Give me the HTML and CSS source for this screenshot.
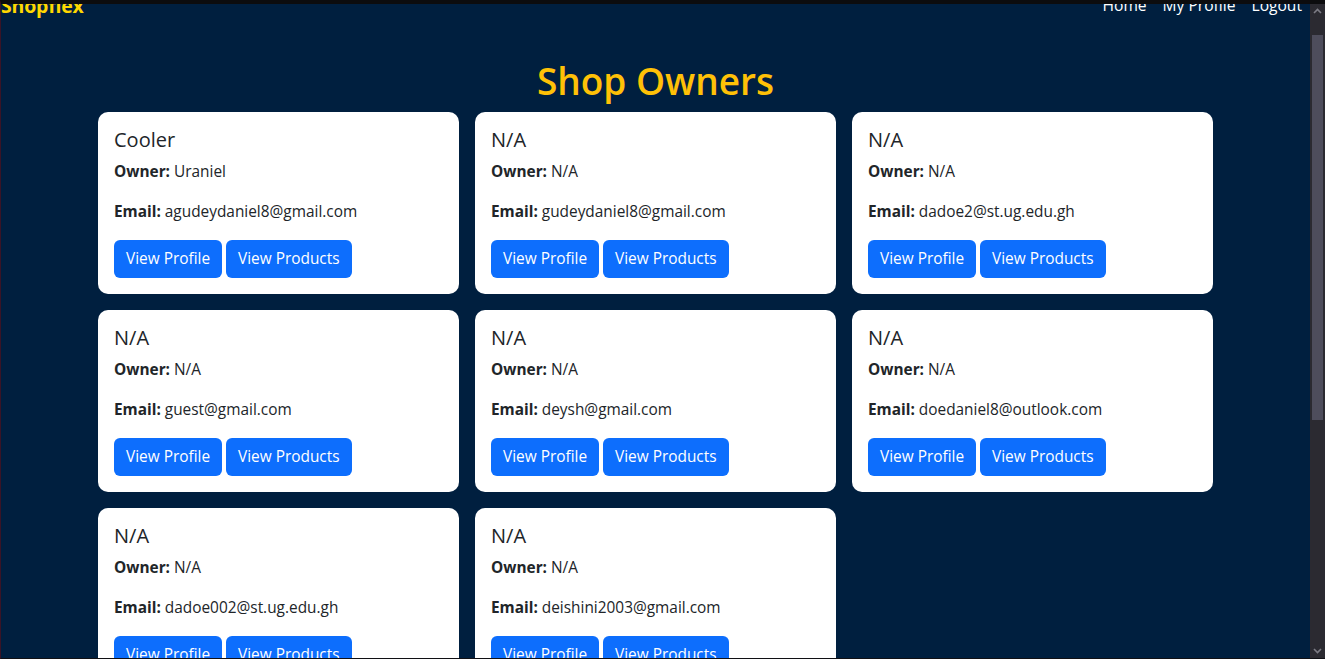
FILE: index.html
```html
<!DOCTYPE html>
<html lang="en">
<head>
<meta charset="utf-8">
<title>Shopflex - Shop Owners</title>
<link rel="stylesheet" href="styles.css">
</head>
<body>
<div class="window">
  <div class="page">
    <header class="navbar">
      <span class="brand">Shopflex</span>
      <nav class="links">
        <a href="#">Home</a>
        <a href="#">My Profile</a>
        <a href="#">Logout</a>
      </nav>
    </header>
    <h1 class="title">Shop Owners</h1>
    <main class="grid">
      <div class="card">
        <h5>Cooler</h5>
        <p><b>Owner:</b> Uraniel</p>
        <p><b>Email:</b> agudeydaniel8@gmail.com</p>
        <div class="btns"><a class="btn" href="#">View Profile</a><a class="btn" href="#">View Products</a></div>
      </div>
      <div class="card">
        <h5>N/A</h5>
        <p><b>Owner:</b> N/A</p>
        <p><b>Email:</b> gudeydaniel8@gmail.com</p>
        <div class="btns"><a class="btn" href="#">View Profile</a><a class="btn" href="#">View Products</a></div>
      </div>
      <div class="card">
        <h5>N/A</h5>
        <p><b>Owner:</b> N/A</p>
        <p><b>Email:</b> dadoe2@st.ug.edu.gh</p>
        <div class="btns"><a class="btn" href="#">View Profile</a><a class="btn" href="#">View Products</a></div>
      </div>
      <div class="card">
        <h5>N/A</h5>
        <p><b>Owner:</b> N/A</p>
        <p><b>Email:</b> guest@gmail.com</p>
        <div class="btns"><a class="btn" href="#">View Profile</a><a class="btn" href="#">View Products</a></div>
      </div>
      <div class="card">
        <h5>N/A</h5>
        <p><b>Owner:</b> N/A</p>
        <p><b>Email:</b> deysh@gmail.com</p>
        <div class="btns"><a class="btn" href="#">View Profile</a><a class="btn" href="#">View Products</a></div>
      </div>
      <div class="card">
        <h5>N/A</h5>
        <p><b>Owner:</b> N/A</p>
        <p><b>Email:</b> doedaniel8@outlook.com</p>
        <div class="btns"><a class="btn" href="#">View Profile</a><a class="btn" href="#">View Products</a></div>
      </div>
      <div class="card">
        <h5>N/A</h5>
        <p><b>Owner:</b> N/A</p>
        <p><b>Email:</b> dadoe002@st.ug.edu.gh</p>
        <div class="btns"><a class="btn" href="#">View Profile</a><a class="btn" href="#">View Products</a></div>
      </div>
      <div class="card">
        <h5>N/A</h5>
        <p><b>Owner:</b> N/A</p>
        <p><b>Email:</b> deishini2003@gmail.com</p>
        <div class="btns"><a class="btn" href="#">View Profile</a><a class="btn" href="#">View Products</a></div>
      </div>
    </main>
  </div>
  <div class="scrollbar">
    <svg class="arrow" width="15" height="15" viewBox="0 0 15 15"><path d="M4 9 L7.5 5.5 L11 9" fill="none" stroke="#7d7c85" stroke-width="1.6"/></svg>
    <div class="track"><div class="thumb"></div></div>
    <svg class="arrow" width="15" height="15" viewBox="0 0 15 15"><path d="M4 6 L7.5 9.5 L11 6" fill="none" stroke="#7d7c85" stroke-width="1.6"/></svg>
  </div>
</div>
</body>
</html>
```
FILE: styles.css
```css
* { box-sizing: border-box; }
html, body { margin: 0; padding: 0; }
body {
  width: 1325px;
  height: 659px;
  overflow: hidden;
  background: #0c0c0e;
  font-family: "Open Sans", "Noto Sans", sans-serif;
}
.window {
  height: 659px;
  display: flex;
  border-top: 4px solid #0c0c0e;
  border-left: 1px solid #3a1426;
  border-bottom: 1px solid #101014;
}
.page {
  flex: 1;
  background: #001f3f;
  overflow: hidden;
}
.navbar {
  display: flex;
  justify-content: space-between;
  align-items: center;
  margin-top: -12px;
  height: 26px;
  padding-right: 8px;
}
.brand {
  color: #ffd700;
  font-weight: 700;
  font-size: 19.5px;
  letter-spacing: -0.2px;
}
.links { display: flex; gap: 16px; }
.links a {
  color: #ffffff;
  text-decoration: none;
  font-size: 15.6px;
}
.title {
  margin: 36px 0 0;
  height: 54px;
  line-height: 54px;
  text-align: center;
  color: #ffc107;
  font-size: 37px;
  font-weight: 600;
}
.grid {
  display: grid;
  grid-template-columns: repeat(3, 361px);
  gap: 16px;
  justify-content: center;
  margin-top: 4px;
}
.card {
  background: #ffffff;
  border-radius: 10px;
  padding: 16px;
  color: #212529;
}
.card h5 {
  margin: 0 0 8px;
  font-size: 20px;
  font-weight: 500;
  line-height: 24px;
}
.card p {
  margin: 0 0 16px;
  font-size: 15.4px;
  line-height: 24px;
}
.card b { font-weight: 700; }
.btns { display: flex; gap: 4px; }
.btn {
  display: inline-block;
  height: 38px;
  line-height: 38px;
  padding: 0 12px;
  background: #0d6efd;
  color: #ffffff;
  border-radius: 6px;
  text-decoration: none;
  font-size: 15.4px;
}
.scrollbar {
  width: 15px;
  background: #2b2a31;
  display: flex;
  flex-direction: column;
}
.arrow { display: block; flex: none; }
.track { flex: 1; padding: 16px 2px 0 2px; }
.thumb {
  height: 385px;
  background: #4e4d5c;
}
```
